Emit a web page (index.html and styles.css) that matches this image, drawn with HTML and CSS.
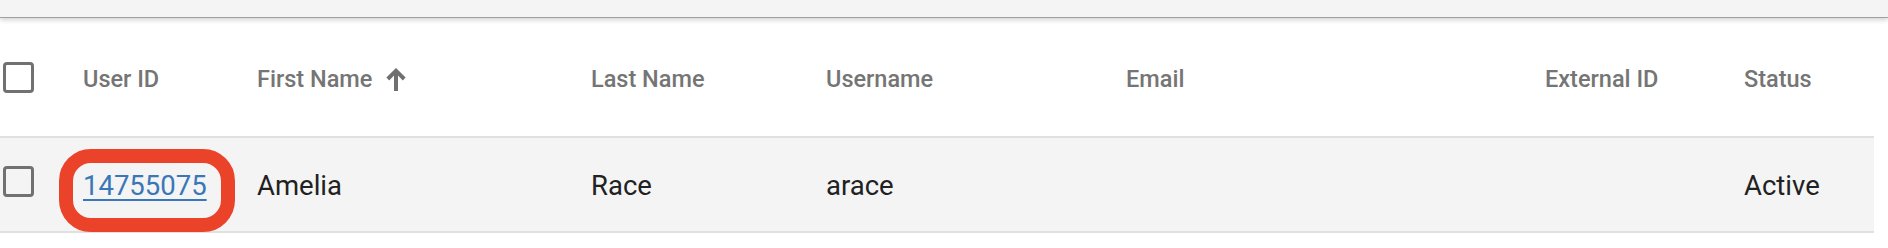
FILE: index.html
```html
<!doctype html>
<html>
<head>
<title>Users</title>
<link rel="stylesheet" href="styles.css">
</head>
<body>

<div class="topbar"></div>

<table class="users">
	<colgroup>
		<col class="c-check">
		<col class="c-id">
		<col class="c-first">
		<col class="c-last">
		<col class="c-user">
		<col class="c-email">
		<col class="c-ext">
		<col class="c-status">
	</colgroup>
	<thead>
	<tr>
		<th><span class="checkbox"></span></th>
		<th>User ID</th>
		<th>
			<span class="sorted">First Name
				<svg class="arrow" viewBox="0 0 20 23"><polygon points="10,0 19.6,9.6 16.8,12.4 12,7.6 12,23 8,23 8,7.6 3.2,12.4 0.4,9.6"/></svg>
			</span>
		</th>
		<th>Last Name</th>
		<th>Username</th>
		<th>Email</th>
		<th>External ID</th>
		<th>Status</th>
	</tr>
	</thead>
	<tbody>
	<tr>
		<td><span class="checkbox"></span></td>
		<td class="idCell">
			<a href="#">14755075</a>
			<span class="highlight"></span>
		</td>
		<td>Amelia</td>
		<td>Race</td>
		<td>arace</td>
		<td></td>
		<td></td>
		<td>Active</td>
	</tr>
	</tbody>
</table>

</body>
</html>
```

FILE: styles.css
```css
body {
	margin: 0px;
	background-color: white;
	font-family: Roboto, "Liberation Sans", sans-serif;
	width: 1888px;
	height: 248px;
	overflow: hidden;
}
.topbar {
	position: relative;
	z-index: 1;
	height: 17px;
	background-color: #f4f4f4;
	border-bottom: 1px solid #a0a0a0;
	box-shadow: 0px 2px 5px rgba(0, 0, 0, 0.18);
}
.users {
	width: 1874px;
	table-layout: fixed;
	border-collapse: collapse;
}
.c-check { width: 83px; }
.c-id { width: 174px; }
.c-first { width: 334px; }
.c-last { width: 235px; }
.c-user { width: 300px; }
.c-email { width: 419px; }
.c-ext { width: 199px; }
.c-status { width: 130px; }

th, td {
	padding: 0px;
	text-align: left;
	vertical-align: middle;
	white-space: nowrap;
}
thead tr {
	height: 119px;
	border-bottom: 2px solid #e0e0e0;
}
th {
	font-size: 23.5px;
	font-weight: 500;
	color: #757575;
	padding-top: 4px;
}
tbody tr {
	height: 95px;
	background-color: #f4f4f4;
	border-bottom: 2px solid #e0e0e0;
}
td {
	font-size: 27.5px;
	color: #212121;
	padding-top: 2px;
}
.checkbox {
	display: block;
	box-sizing: border-box;
	width: 31px;
	height: 31px;
	margin-left: 3px;
	border: 3.5px solid #717171;
	border-radius: 4px;
}
th .checkbox {
	margin-top: -4px;
}
td .checkbox {
	margin-top: -9px;
}
.sorted {
	display: inline-flex;
	align-items: center;
}
.arrow {
	width: 20px;
	height: 23px;
	margin-left: 14px;
	fill: #707070;
}
.idCell {
	position: relative;
}
.idCell a {
	color: #3a77b8;
	text-decoration: underline;
	text-decoration-thickness: 2px;
	text-underline-offset: 4px;
}
.highlight {
	position: absolute;
	left: -24px;
	top: 11px;
	width: 176px;
	height: 83px;
	box-sizing: border-box;
	border: 14px solid #ea4329;
	border-radius: 32px;
}
```
